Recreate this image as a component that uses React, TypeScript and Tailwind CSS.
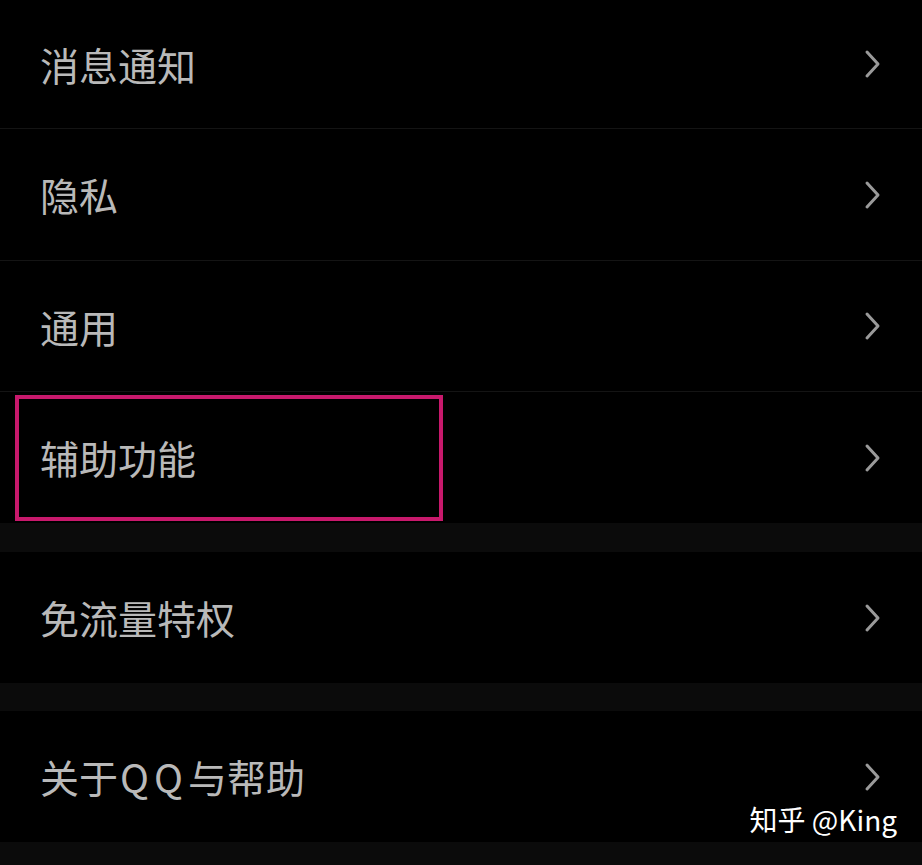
import React from "react";

const Chevron = () => (
  <svg width="18" height="30" viewBox="0 0 18 30" className="shrink-0">
    <polyline points="3,3 14,15 3,27" fill="none" stroke="#9a9a9a" strokeWidth="3" strokeLinecap="round" strokeLinejoin="round" />
  </svg>
);

const Row = ({ label, h = "h-[130px]", border = false, highlight = false }: { label: React.ReactNode; h?: string; border?: boolean; highlight?: boolean }) => (
  <div className={`relative flex items-center justify-between bg-black pl-[40px] pr-[40px] ${h} ${border ? "border-b border-[#141414]" : ""}`}>
    <span className="text-[39px] leading-none text-[#b9b9b9]" style={{ fontFamily: '"Noto Sans CJK SC", sans-serif' }}>
      {label}
    </span>
    <Chevron />
    {highlight && (
      <div className="absolute left-[15px] top-[3px] w-[428px] h-[126px] border-[4px] border-[#c8196c]" />
    )}
  </div>
);

export default function App() {
  return (
    <div className="relative w-[922px] h-[865px] overflow-hidden bg-[#0b0b0b]" style={{ fontFamily: '"Noto Sans CJK SC", sans-serif' }}>
      <Row label="消息通知" h="h-[129px]" border />
      <Row label="隐私" h="h-[132px]" border />
      <Row label="通用" h="h-[131px]" border />
      <Row label="辅助功能" h="h-[131px]" highlight />
      <div className="h-[29px] bg-[#0b0b0b]" />
      <Row label="免流量特权" h="h-[131px]" />
      <div className="h-[28px] bg-[#0b0b0b]" />
      <Row
        label={
          <>
            关于<span className="tracking-[5px] pl-[2px]">QQ</span>与帮助
          </>
        }
        h="h-[131px]"
      />
      <div className="absolute right-[25px] top-[805px] text-[28px] leading-none text-white" style={{ fontFamily: '"Noto Sans CJK SC", sans-serif' }}>
        知乎 @King
      </div>
    </div>
  );
}
